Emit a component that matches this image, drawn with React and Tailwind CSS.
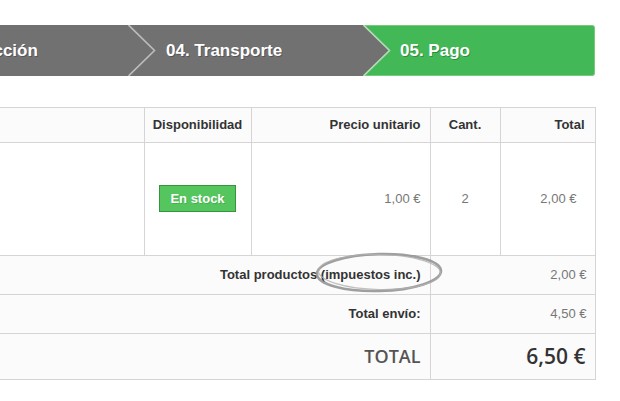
import React from "react";

const arial = { fontFamily: '"Liberation Sans", Arial, sans-serif' };

function Arrow({ fill, stroke }) {
  return (
    <svg
      className="absolute left-full top-0 z-10"
      width="28"
      height="51"
      viewBox="0 0 28 51"
    >
      <polygon points="0,0 26,25.5 0,51" fill={fill} />
      <polyline points="0.5,0 26.5,25.5 0.5,51" fill="none" stroke={stroke} strokeWidth="1.6" />
    </svg>
  );
}

export default function App() {
  return (
    <div
      className="relative w-[620px] h-[401px] overflow-hidden bg-white pt-[25px]"
      style={arial}
    >
      {/* Steps */}
      <div className="flex h-[51px] w-[595px] text-[17px] font-bold text-white [text-shadow:1px_1px_rgba(0,0,0,0.25)]">
        <div className="relative w-[128px] shrink-0 bg-[#727171]">
          <div className="flex h-full items-center overflow-hidden whitespace-nowrap">
            <span className="ml-[-68px]">03. Dirección</span>
          </div>
          <Arrow fill="#727171" stroke="#bdbcbc" />
        </div>
        <div className="relative w-[235px] shrink-0 bg-[#727171] flex items-center pl-[38px] whitespace-nowrap">
          <span>04. Transporte</span>
          <Arrow fill="#727171" stroke="#b9d9bb" />
        </div>
        <div className="flex flex-1 items-center rounded-r-[3px] border border-l-0 border-[#74cb7b] bg-[#42b856] pl-[37px] whitespace-nowrap">
          <span>05. Pago</span>
        </div>
      </div>

      {/* Table */}
      <table className="mt-[31px] w-[595px] table-fixed border-collapse text-[13px] text-[#777]">
        <colgroup>
          <col className="w-[144px]" />
          <col className="w-[107px]" />
          <col className="w-[179px]" />
          <col className="w-[70px]" />
          <col className="w-[95px]" />
        </colgroup>
        <thead>
          <tr className="h-[35px] bg-[#fbfbfb] font-bold text-[#333]">
            <td className="border border-l-0 border-[#d6d4d4]"></td>
            <td className="border border-[#d6d4d4] text-center">Disponibilidad</td>
            <td className="border border-[#d6d4d4] pr-[9px] text-right">Precio unitario</td>
            <td className="border border-[#d6d4d4] text-center">Cant.</td>
            <td className="border border-[#d6d4d4] pr-[10px] text-right">Total</td>
          </tr>
        </thead>
        <tbody>
          <tr className="h-[113px] bg-white">
            <td className="border border-l-0 border-[#d6d4d4]"></td>
            <td className="border border-[#d6d4d4] text-center align-middle">
              <div className="mx-auto mb-[2px] h-[27px] w-[77px] border border-[#36943e] bg-[#55c65e] text-[13px] font-bold leading-[25px] text-white [text-shadow:1px_1px_rgba(0,0,0,0.15)]">
                En stock
              </div>
            </td>
            <td className="border border-[#d6d4d4] pr-[9px] text-right">1,00 €</td>
            <td className="border border-[#d6d4d4] text-center">2</td>
            <td className="border border-[#d6d4d4] pr-[18px] text-right">2,00 €</td>
          </tr>
        </tbody>
        <tfoot className="bg-[#fbfbfb]">
          <tr className="h-[39px]">
            <td colSpan={3} className="border border-l-0 border-[#d6d4d4] pr-[9px] text-right font-bold text-[#333]">
              Total productos (impuestos inc.)
            </td>
            <td colSpan={2} className="border border-[#d6d4d4] pr-[8px] text-right">2,00 €</td>
          </tr>
          <tr className="h-[39px]">
            <td colSpan={3} className="border border-l-0 border-[#d6d4d4] pr-[9px] text-right font-bold text-[#333]">
              Total envío:
            </td>
            <td colSpan={2} className="border border-[#d6d4d4] pr-[8px] text-right">4,50 €</td>
          </tr>
          <tr className="h-[46px]" style={{ fontFamily: '"Open Sans", sans-serif' }}>
            <td colSpan={3} className="border border-l-0 border-[#d6d4d4] pr-[9px] text-right text-[18px] font-semibold text-[#555454]">
              TOTAL
            </td>
            <td colSpan={2} className="border border-[#d6d4d4] pr-[9px] text-right text-[21px] font-semibold text-[#333]">
              6,50 €
            </td>
          </tr>
        </tfoot>
      </table>

      {/* Hand-drawn ellipse annotation */}
      <svg
        className="pointer-events-none absolute left-[310px] top-[248px]"
        width="140"
        height="50"
        viewBox="0 0 140 50"
      >
        <ellipse cx="69" cy="24.5" rx="62" ry="18.5" fill="none" stroke="#8e8e8e" strokeWidth="2.6" opacity="0.85" transform="rotate(-1.5 69 24.5)" />
        <ellipse cx="69.5" cy="24" rx="61" ry="17.5" fill="none" stroke="#b0b0b0" strokeWidth="1.2" opacity="0.8" transform="rotate(1 69 24)" />
      </svg>
    </div>
  );
}
